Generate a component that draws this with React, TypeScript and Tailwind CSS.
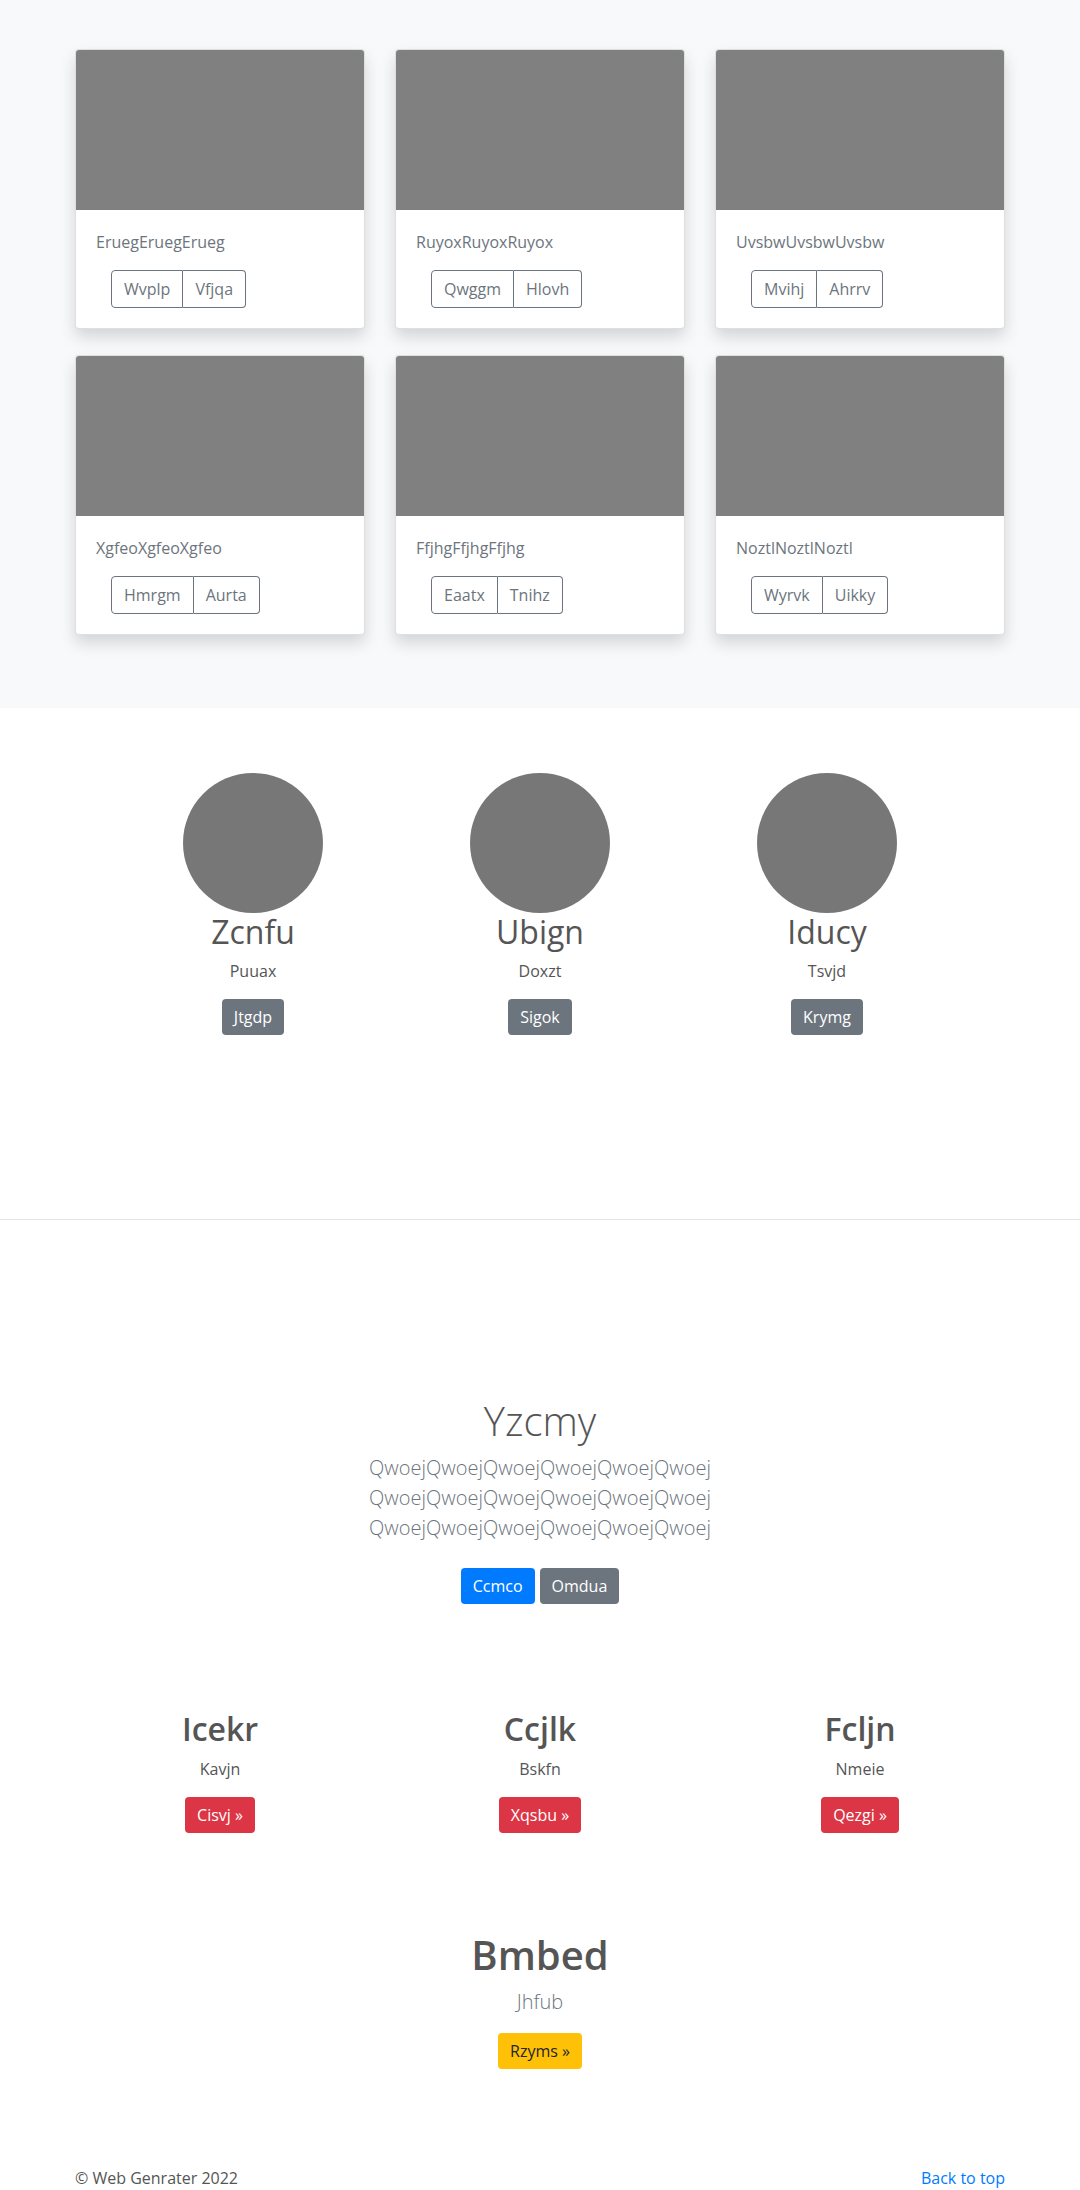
const cards = [
  { title: 'EruegEruegErueg', a: 'Wvplp', b: 'Vfjqa' },
  { title: 'RuyoxRuyoxRuyox', a: 'Qwggm', b: 'Hlovh' },
  { title: 'UvsbwUvsbwUvsbw', a: 'Mvihj', b: 'Ahrrv' },
  { title: 'XgfeoXgfeoXgfeo', a: 'Hmrgm', b: 'Aurta' },
  { title: 'FfjhgFfjhgFfjhg', a: 'Eaatx', b: 'Tnihz' },
  { title: 'NoztlNoztlNoztl', a: 'Wyrvk', b: 'Uikky' },
];

const people = [
  { name: 'Zcnfu', role: 'Puuax', btn: 'Jtgdp' },
  { name: 'Ubign', role: 'Doxzt', btn: 'Sigok' },
  { name: 'Iducy', role: 'Tsvjd', btn: 'Krymg' },
];

const features = [
  { title: 'Icekr', text: 'Kavjn', btn: 'Cisvj' },
  { title: 'Ccjlk', text: 'Bskfn', btn: 'Xqsbu' },
  { title: 'Fcljn', text: 'Nmeie', btn: 'Qezgi' },
];

const Card = ({ title, a, b }) => (
  <div className="bg-white rounded-[4px] border border-black/[0.125] overflow-hidden shadow-[0_8px_16px_rgba(0,0,0,0.15)]">
    <div className="h-[160px] bg-[#808080]" />
    <div className="p-5">
      <p className="text-base leading-6 mb-4 text-[#6c757d]">{title}</p>
      <div className="ml-[15px] inline-flex">
        <button className="border border-[#6c757d] rounded-l-[4px] px-3 py-1.5 text-base leading-6 text-[#6c757d]">{a}</button>
        <button className="border border-l-0 border-[#6c757d] rounded-r-[4px] px-3 py-1.5 text-base leading-6 text-[#6c757d]">{b}</button>
      </div>
    </div>
  </div>
);

export default function App() {
  return (
    <div className="min-h-[2190px] bg-white text-[#555] font-['Open_Sans',sans-serif]">
      <section className="bg-[#f8f9fa] pt-[49px] pb-[73px]">
        <div className="w-[930px] mx-auto grid grid-cols-3 gap-x-[30px] gap-y-[26px]">
          {cards.map((c) => (
            <Card key={c.title} {...c} />
          ))}
        </div>
      </section>

      <section className="pt-[65px] pb-[184px]">
        <div className="w-[861px] mx-auto grid grid-cols-3">
          {people.map((p) => (
            <div key={p.name} className="flex flex-col items-center">
              <div className="w-[140px] h-[140px] rounded-full bg-[#777]" />
              <h2 className="text-[32px] leading-[1.2] font-normal mb-2 text-[#555]">{p.name}</h2>
              <p className="text-base leading-6 mb-4 text-[#555]">{p.role}</p>
              <button className="bg-[#6c757d] text-white rounded-[4px] px-3 py-1.5 text-base leading-6">{p.btn}</button>
            </div>
          ))}
        </div>
      </section>

      <hr className="border-0 border-t border-[#e5e5e5]" />

      <section className="pt-[177px] text-center">
        <h1 className="text-[40px] leading-[1.2] font-light mb-2 text-[#555]">Yzcmy</h1>
        <p className="text-xl leading-[30px] font-light mb-4 text-[#6c757d]">
          QwoejQwoejQwoejQwoejQwoejQwoej
          <br />
          QwoejQwoejQwoejQwoejQwoejQwoej
          <br />
          QwoejQwoejQwoejQwoejQwoejQwoej
        </p>
        <div className="flex justify-center gap-[5px] mt-[25px] mb-2">
          <button className="bg-[#007bff] text-white rounded-[4px] px-3 py-1.5 text-base leading-6">Ccmco</button>
          <button className="bg-[#6c757d] text-white rounded-[4px] px-3 py-1.5 text-base leading-6">Omdua</button>
        </div>
      </section>

      <section className="pt-[98px]">
        <div className="w-[960px] mx-auto grid grid-cols-3">
          {features.map((f) => (
            <div key={f.title} className="flex flex-col items-center">
              <h2 className="text-[32px] leading-[1.2] font-semibold mb-2 text-[#555]">{f.title}</h2>
              <p className="text-base leading-6 mb-4 text-[#555]">{f.text}</p>
              <button className="bg-[#dc3545] text-white rounded-[4px] px-3 py-1.5 text-base leading-6">{f.btn} »</button>
            </div>
          ))}
        </div>
      </section>

      <section className="pt-[98px] flex flex-col items-center">
        <h1 className="text-[40px] leading-[1.2] font-semibold mb-2 text-[#555]">Bmbed</h1>
        <p className="text-xl leading-[30px] font-light mb-4 text-[#6c757d]">Jhfub</p>
        <button className="bg-[#ffc107] text-[#212529] rounded-[4px] px-3 py-1.5 text-base leading-6">Rzyms »</button>
      </section>

      <footer className="pt-[97px] pb-12">
        <div className="w-[930px] mx-auto flex justify-between text-base leading-6">
          <p className="text-[#555]">© Web Genrater 2022</p>
          <a href="#" className="text-[#007bff]">Back to top</a>
        </div>
      </footer>
    </div>
  );
}
